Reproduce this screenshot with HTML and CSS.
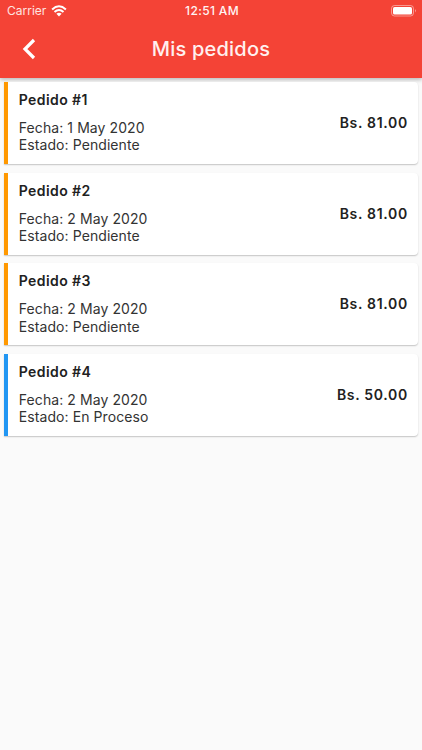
FILE: index.html
```html
<!DOCTYPE html>
<html lang="es">
<head>
<meta charset="utf-8">
<title>Mis pedidos</title>
<link rel="stylesheet" href="styles.css">
</head>
<body>
<header class="header">
  <div class="status">
    <div class="carrier"><span class="carrier-name">Carrier</span>
      <svg class="wifi" viewBox="0 0 16 12"><path d="M1.1 4.4Q8-1.8 14.9 4.4M3.5 7Q8 3 12.5 7" fill="none" stroke="#fff" stroke-width="2"/><path d="M5.4 8.8Q8 6.9 10.6 8.8L8 11.5Z" fill="#fff"/></svg>
    </div>
    <div class="time">12:51 AM</div>
    <svg class="battery" viewBox="0 0 26 12"><rect x=".5" y=".5" width="22" height="10.5" rx="3" fill="none" stroke="#fff" stroke-opacity=".45"/><rect x="2" y="2" width="19" height="7.5" rx="1.6" fill="#fff"/><path d="M24 4Q25.8 5.8 24 7.6Z" fill="#fff" fill-opacity=".6"/></svg>
  </div>
  <div class="bar">
    <svg class="back" viewBox="0 0 14 22"><path d="M12 2L3 11L12 20" fill="none" stroke="#fff" stroke-width="3.2"/></svg>
    <h1 class="title">Mis pedidos</h1>
  </div>
</header>
<main class="list">
  <article class="card"><div class="info"><h2 class="name">Pedido #1</h2><p class="line">Fecha: 1 May 2020</p><p class="line">Estado: Pendiente</p></div><div class="price">Bs. 81.00</div></article>
  <article class="card"><div class="info"><h2 class="name">Pedido #2</h2><p class="line">Fecha: 2 May 2020</p><p class="line">Estado: Pendiente</p></div><div class="price">Bs. 81.00</div></article>
  <article class="card"><div class="info"><h2 class="name">Pedido #3</h2><p class="line">Fecha: 2 May 2020</p><p class="line">Estado: Pendiente</p></div><div class="price">Bs. 81.00</div></article>
  <article class="card active"><div class="info"><h2 class="name">Pedido #4</h2><p class="line">Fecha: 2 May 2020</p><p class="line">Estado: En Proceso</p></div><div class="price">Bs. 50.00</div></article>
</main>
</body>
</html>
```
FILE: styles.css
```css
* { box-sizing: border-box; }
body { margin: 0; min-height: 750px; background: #fafafa; color: #212121; font-family: Inter, "Liberation Sans", sans-serif; }
h1, h2, p { margin: 0; }
.header { height: 77.6px; background: #f44336; color: #fff; box-shadow: 0 2px 4px rgba(0,0,0,.25); }
.status { height: 21px; display: grid; grid-template-columns: 1fr auto 1fr; align-items: center; padding: 0 5px 0 7px; font-size: 12px; }
.carrier { display: flex; align-items: center; gap: 5px; color: #ffe3e0; }
.wifi { width: 16px; height: 12px; }
.time { font-weight: 500; letter-spacing: .35px; color: #fff4f3; }
.battery { width: 26px; height: 12px; justify-self: end; }
.bar { height: 56px; display: grid; grid-template-columns: 58px 1fr 58px; align-items: center; }
.back { width: 14px; height: 22px; margin-left: 22px; }
.title { text-align: center; font-size: 20px; font-weight: 500; letter-spacing: .2px; line-height: 24px; color: #fff0ef; }
.list { display: flex; flex-direction: column; gap: 8.6px; padding: 4.5px 4px 4px; }
.card { height: 82px; display: flex; justify-content: space-between; background: #fff; border-left: 4px solid #ff9800; border-radius: 0 4px 4px 0; padding: 9px 10px 0 10.8px; box-shadow: 0 1px 1.5px rgba(0,0,0,.22); }
.active { border-color: #2196f3; }
.name { font-size: 14px; font-weight: 600; line-height: 18px; letter-spacing: .4px; margin-bottom: 10px; }
.line { font-size: 14px; line-height: 17.3px; letter-spacing: .08px; color: #333; }
.price { font-size: 14px; font-weight: 600; line-height: 18px; letter-spacing: .7px; margin-top: 23px; }
```
